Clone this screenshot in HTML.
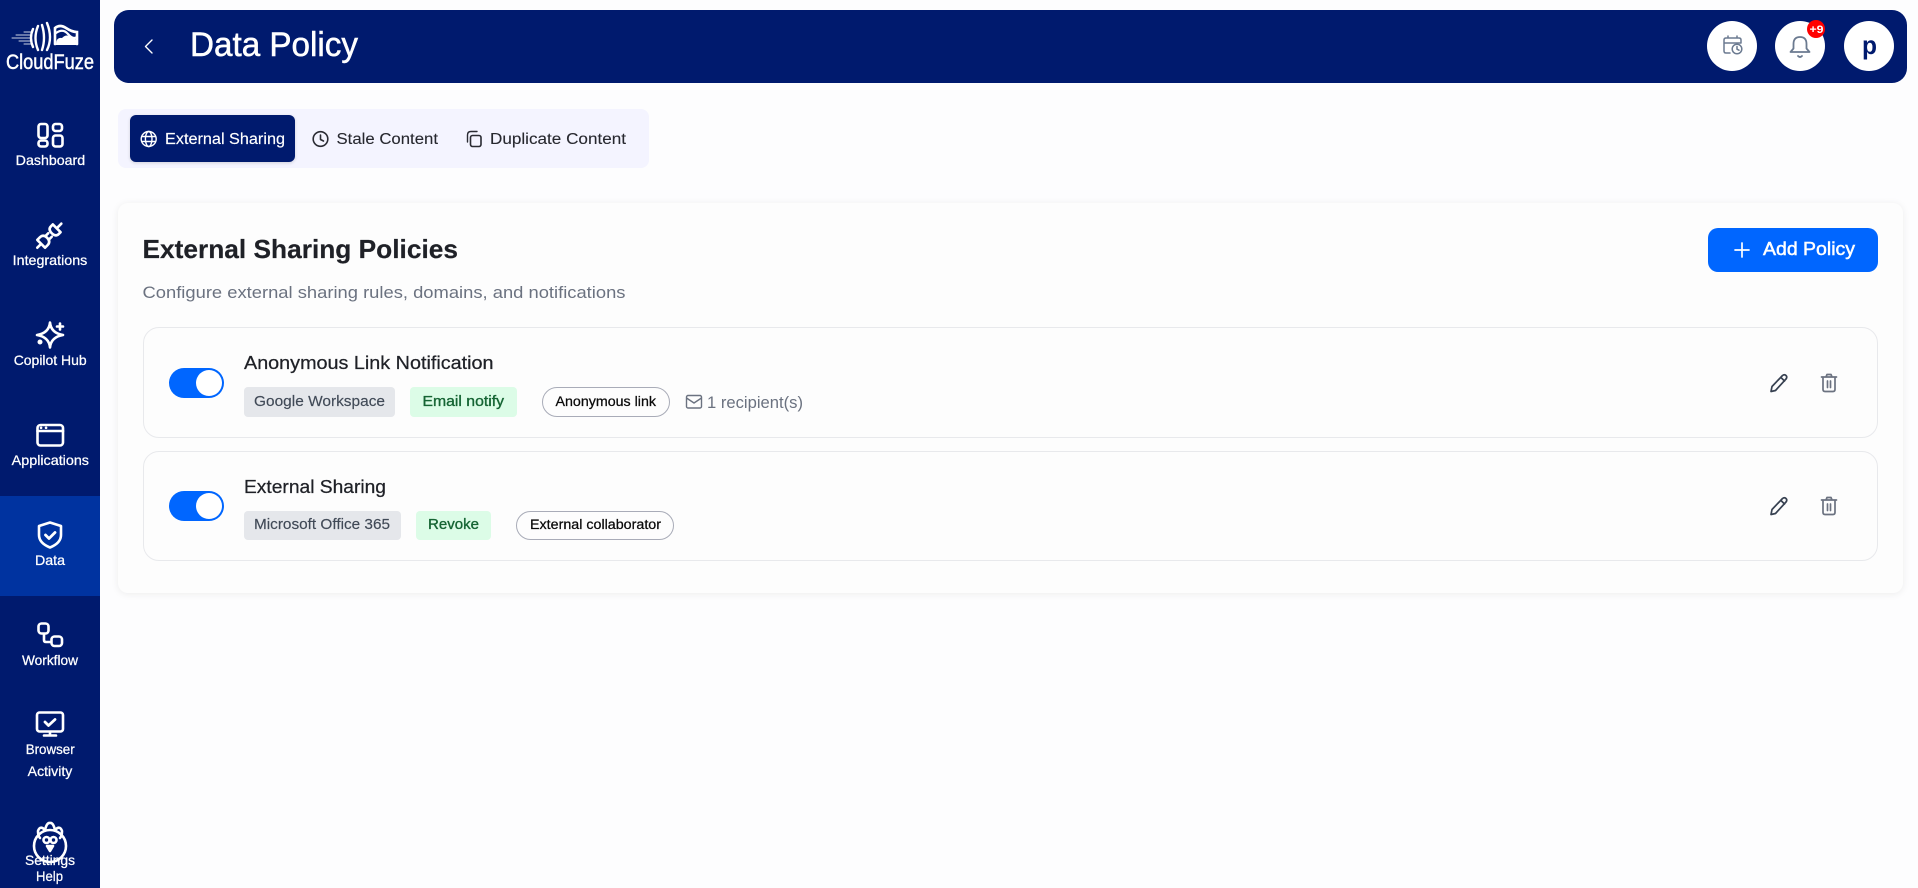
<!DOCTYPE html>
<html lang="en">
<head>
<meta charset="utf-8">
<title>Data Policy</title>
<style>
html,body{margin:0;padding:0;width:1918px;height:888px;overflow:hidden;background:#fdfdfe;font-family:"Liberation Sans",sans-serif}
.b{position:absolute;box-sizing:border-box}
svg{position:absolute;left:0;top:0}
text{font-family:"Liberation Sans",sans-serif}
.nav{fill:#fff;font-size:14px;stroke:#fff;stroke-width:.25}
.ic{fill:none;stroke:#fff;stroke-width:2.6;stroke-linecap:round;stroke-linejoin:round}
</style>
</head>
<body>
<div class="b" style="left:0;top:0;width:100px;height:888px;background:#001a6e"></div>
<div class="b" style="left:0;top:496px;width:100px;height:100px;background:#0033a0"></div>
<div class="b" style="left:114px;top:10px;width:1793px;height:73px;background:#001a6e;border-radius:15px"></div>
<div class="b" style="left:118px;top:109px;width:531px;height:59px;background:#f4f4ff;border-radius:8px"></div>
<div class="b" style="left:130px;top:115px;width:165px;height:47px;background:#001a6e;border-radius:6px;box-shadow:0 1px 3px rgba(0,0,0,.15)"></div>
<div class="b" style="left:118px;top:203px;width:1785px;height:390px;background:#fdfdfd;border-radius:10px;box-shadow:0 1px 8px rgba(0,0,0,.07)"></div>
<div class="b" style="left:1708px;top:228px;width:170px;height:44px;background:#0066ff;border-radius:10px"></div>
<div class="b" style="left:143px;top:327px;width:1735px;height:111px;border:1.5px solid #e8e9ec;border-radius:16px"></div>
<div class="b" style="left:143px;top:451px;width:1735px;height:110px;border:1.5px solid #e8e9ec;border-radius:16px"></div>

<div class="b" style="left:169px;top:368px;width:55px;height:30px;background:#0066ff;border-radius:15px"></div>
<div class="b" style="left:196px;top:370px;width:26px;height:26px;background:#fff;border-radius:50%"></div>
<div class="b" style="left:169px;top:491px;width:55px;height:30px;background:#0066ff;border-radius:15px"></div>
<div class="b" style="left:196px;top:493px;width:26px;height:26px;background:#fff;border-radius:50%"></div>

<div class="b" style="left:244px;top:387px;width:151px;height:30px;background:#e5e7eb;border-radius:4px"></div>
<div class="b" style="left:410px;top:387px;width:107px;height:30px;background:#dcfce7;border-radius:4px"></div>
<div class="b" style="left:542px;top:387px;width:128px;height:30px;border:1px solid #a9acb8;border-radius:15px;background:#fdfdfd"></div>
<div class="b" style="left:244px;top:511px;width:157px;height:29px;background:#e5e7eb;border-radius:4px"></div>
<div class="b" style="left:416px;top:511px;width:75px;height:29px;background:#dcfce7;border-radius:4px"></div>
<div class="b" style="left:516px;top:511px;width:158px;height:29px;border:1px solid #a9acb8;border-radius:15px;background:#fdfdfd"></div>

<div class="b" style="left:1707px;top:21px;width:50px;height:50px;background:#fff;border-radius:50%"></div>
<div class="b" style="left:1775px;top:21px;width:50px;height:50px;background:#fff;border-radius:50%"></div>
<div class="b" style="left:1844px;top:21px;width:50px;height:50px;background:#fff;border-radius:50%"></div>
<div class="b" style="left:1807px;top:20px;width:18px;height:18px;background:#f00;border-radius:50%"></div>

<svg width="1918" height="888" viewBox="0 0 1918 888" xmlns="http://www.w3.org/2000/svg">
<!-- logo -->
<g fill="none" stroke="#fff" stroke-linecap="round">
<path d="M12 38H30M16 35H30M19 41H30M24 32H31M24 44H31" stroke-width="1" opacity=".8"/>
<path d="M33 29Q29 38 33 47M38 26Q33 38 38 50M42 25Q46 38 42 50M47 23Q53 38 47 50" stroke-width="2.4"/>
<path d="M55 44V28Q60 24 66 28T77 32V44" stroke-width="2.6"/>
<path d="M56 33Q63 28 68 34T77 37" stroke-width="2.2"/>
</g>
<path d="M56 45Q56 37 62 38Q67 33 71 38Q78 38 78 45Z" fill="#fff"/>
<text x="6" y="69" font-size="21" fill="#fff" stroke="#fff" stroke-width=".45" textLength="88" lengthAdjust="spacingAndGlyphs">CloudFuze</text>

<!-- nav icons -->
<g class="ic">
<rect x="38.500" y="124" width="9" height="14" rx="2.500"/><rect x="53" y="124" width="9" height="7" rx="2.500"/><rect x="53" y="135.500" width="9.500" height="11" rx="2.500"/><rect x="38.500" y="140.500" width="9" height="6" rx="2.500"/>
<g transform="rotate(-45 50 235)">
<path d="M32 235H37"/>
<path d="M37.500 229.500H41Q46 229.500 46 235Q46 240.500 41 240.500H37.500Z"/>
<path d="M46 232.500H50M46 237.500H50"/>
<path d="M59.500 229.500H57Q52.500 229.500 52.500 235Q52.500 240.500 57 240.500H59.500Z"/>
<path d="M60 235H66"/>
</g>
<path d="M50 322.500Q51 333 63 335Q51 337 50 347.500Q49 337 37 335Q49 333 50 322.500ZM60 323.500V329.500M57 326.500H63"/>
<circle cx="40" cy="342" r="1.200" fill="#fff"/>
<rect x="37.500" y="425" width="25.500" height="20.500" rx="3"/><path d="M37.500 431H63M41 427.800H41.100M46 427.800H46.100"/>
<path d="M50 522.500L61 526V535Q61 543 50 547.500Q39 543 39 535V526Z"/><path d="M45.500 535L49 538.500L55 532.500" stroke-width="2.800"/>
<rect x="38.500" y="623.500" width="10" height="10" rx="3"/><rect x="51.500" y="636.500" width="10.500" height="9.500" rx="3"/><path d="M44 634V640Q44 642 46 642H51"/>
<rect x="37" y="712.500" width="26" height="19" rx="2.500"/><path d="M50 732V735M44 735.500H56"/><path d="M45 722L48.500 725.500L55 719.500" stroke-width="2.800"/>
<circle cx="50" cy="846" r="16"/>
<path d="M45 830Q47 822 50 823Q53 822 55 830Q60 825 62 831Q62 836 60 838M40 838Q38 836 38 831Q40 825 45 830"/>
<circle cx="46.500" cy="840" r="3"/><circle cx="53.500" cy="840" r="3"/><path d="M47 846Q50 851 50 851Q50 851 53 846Z" fill="#fff"/>
</g>
<g class="nav">
<text x="15.700" y="165" textLength="69.500" lengthAdjust="spacingAndGlyphs">Dashboard</text>
<text x="12.700" y="265" textLength="74.600" lengthAdjust="spacingAndGlyphs">Integrations</text>
<text x="13.700" y="365" textLength="73" lengthAdjust="spacingAndGlyphs">Copilot Hub</text>
<text x="11.700" y="465" textLength="77.300" lengthAdjust="spacingAndGlyphs">Applications</text>
<text x="35" y="565" textLength="30" lengthAdjust="spacingAndGlyphs">Data</text>
<text x="22" y="665" textLength="56" lengthAdjust="spacingAndGlyphs">Workflow</text>
<text x="25.700" y="754" textLength="49" lengthAdjust="spacingAndGlyphs">Browser</text>
<text x="27.700" y="776" textLength="44.600" lengthAdjust="spacingAndGlyphs">Activity</text>
<text x="25" y="865" textLength="50" lengthAdjust="spacingAndGlyphs">Settings</text>
<text x="36" y="881" textLength="27" lengthAdjust="spacingAndGlyphs">Help</text>
</g>

<!-- header -->
<path d="M152 40L145.500 46.500L152 53" fill="none" stroke="#fff" stroke-width="1.400" stroke-linecap="round" stroke-linejoin="round"/>
<text x="190" y="56" font-size="34" fill="#fff" stroke="#fff" stroke-width=".5" textLength="168" lengthAdjust="spacingAndGlyphs">Data Policy</text>
<g fill="none" stroke="#6b7a90" stroke-width="1.500" stroke-linecap="round" stroke-linejoin="round">
<path d="M1741 43V40Q1741 38 1739 38H1726Q1724 38 1724 40V51Q1724 53 1726 53H1730M1728 38V36M1737 38V36M1724 43H1741"/>
<circle cx="1737" cy="49" r="4.800" fill="#fff"/><path d="M1737 46.500V49.200L1739 50.200"/>
<path d="M1800 37Q1793.500 37 1793.500 44V48.500L1790.500 52H1809.500L1806.500 48.500V44Q1806.500 37 1800 37ZM1798 56Q1800 58 1802 56" stroke-width="1.800"/>
</g>
<text x="1809.500" y="33" font-size="11" font-weight="700" fill="#fff" textLength="14" lengthAdjust="spacingAndGlyphs">+9</text>
<text x="1862" y="54" font-size="26" font-weight="700" fill="#001a6e" textLength="15" lengthAdjust="spacingAndGlyphs">p</text>

<!-- tabs -->
<g fill="none" stroke="#fff" stroke-width="1.400"><circle cx="148.700" cy="139" r="7.500"/><ellipse cx="148.700" cy="139" rx="3.300" ry="7.500"/><path d="M141.500 136.500H156M141.500 141.500H156"/></g>
<text x="165" y="144" font-size="15.500" fill="#fff" stroke="#fff" stroke-width=".15" textLength="120" lengthAdjust="spacingAndGlyphs">External Sharing</text>
<g fill="none" stroke="#2a2b33" stroke-width="1.600" stroke-linecap="round" stroke-linejoin="round"><circle cx="320.500" cy="139" r="7.300"/><path d="M320.500 135V139.500L323.500 141"/>
<rect x="470.500" y="135.500" width="10.500" height="11" rx="2"/><path d="M467.500 142V135Q467.500 131.500 471 131.500H477" stroke-width="1.400"/></g>
<text x="336.500" y="144" font-size="15.500" fill="#27282f" stroke="#27282f" stroke-width=".1" textLength="101.500" lengthAdjust="spacingAndGlyphs">Stale Content</text>
<text x="490" y="144" font-size="15.500" fill="#27282f" stroke="#27282f" stroke-width=".1" textLength="136" lengthAdjust="spacingAndGlyphs">Duplicate Content</text>

<!-- card head -->
<text x="142.500" y="258" font-size="26" font-weight="700" fill="#1f2127" stroke="#1f2127" stroke-width=".2" textLength="315.500" lengthAdjust="spacingAndGlyphs">External Sharing Policies</text>
<text x="142.500" y="298" font-size="17" fill="#6b7280" textLength="483" lengthAdjust="spacingAndGlyphs">Configure external sharing rules, domains, and notifications</text>
<path d="M1742 243V257M1735 250H1749" stroke="#fff" stroke-width="1.700" stroke-linecap="round"/>
<text x="1763" y="255" font-size="18.500" fill="#fff" stroke="#fff" stroke-width=".5" textLength="92" lengthAdjust="spacingAndGlyphs">Add Policy</text>

<!-- rows -->
<text x="244" y="369" font-size="18.500" fill="#1f2127" stroke="#1f2127" stroke-width=".25" textLength="249.500" lengthAdjust="spacingAndGlyphs">Anonymous Link Notification</text>
<text x="244" y="493" font-size="18.500" fill="#1f2127" stroke="#1f2127" stroke-width=".25" textLength="142" lengthAdjust="spacingAndGlyphs">External Sharing</text>

<text x="254" y="406" font-size="14.500" fill="#414a57" stroke="#414a57" stroke-width=".15" textLength="131" lengthAdjust="spacingAndGlyphs">Google Workspace</text>
<text x="422.500" y="406" font-size="14.500" fill="#166534" stroke="#166534" stroke-width=".35" textLength="81.500" lengthAdjust="spacingAndGlyphs">Email notify</text>
<text x="555.500" y="406" font-size="13.500" fill="#0a0a0a" stroke="#0a0a0a" stroke-width=".25" textLength="100.500" lengthAdjust="spacingAndGlyphs">Anonymous link</text>
<g fill="none" stroke="#6b7280" stroke-width="1.400" stroke-linejoin="round"><rect x="686.500" y="395.500" width="15" height="12.500" rx="1.500"/><path d="M686.500 398L694 403L701.500 398"/></g>
<text x="707" y="408" font-size="16.500" fill="#6b7280" textLength="96" lengthAdjust="spacingAndGlyphs">1 recipient(s)</text>

<text x="254" y="529" font-size="14.500" fill="#414a57" stroke="#414a57" stroke-width=".15" textLength="136" lengthAdjust="spacingAndGlyphs">Microsoft Office 365</text>
<text x="428" y="529" font-size="14.500" fill="#166534" stroke="#166534" stroke-width=".35" textLength="51" lengthAdjust="spacingAndGlyphs">Revoke</text>
<text x="530" y="529" font-size="13.500" fill="#0a0a0a" stroke="#0a0a0a" stroke-width=".25" textLength="131" lengthAdjust="spacingAndGlyphs">External collaborator</text>

<!-- action icons -->
<g fill="none" stroke-linecap="round" stroke-linejoin="round">
<path d="M1771 391.500L1772 386.500L1782.500 375.500Q1784.500 374 1786 375.500Q1787.500 377 1786 379L1775.500 390.500ZM1781 377.500L1784.500 381" stroke="#374151" stroke-width="1.700"/>
<path d="M1823 377H1835V389.500Q1835 391.500 1833 391.500H1825Q1823 391.500 1823 389.500ZM1821.500 377H1836.500M1826 377L1827 374.500H1831L1832 377M1827.500 381V387.500M1830.500 381V387.500" stroke="#6b7280" stroke-width="1.700"/>
</g>
<g fill="none" stroke-linecap="round" stroke-linejoin="round" transform="translate(0 123)">
<path d="M1771 391.500L1772 386.500L1782.500 375.500Q1784.500 374 1786 375.500Q1787.500 377 1786 379L1775.500 390.500ZM1781 377.500L1784.500 381" stroke="#374151" stroke-width="1.700"/>
<path d="M1823 377H1835V389.500Q1835 391.500 1833 391.500H1825Q1823 391.500 1823 389.500ZM1821.500 377H1836.500M1826 377L1827 374.500H1831L1832 377M1827.500 381V387.500M1830.500 381V387.500" stroke="#6b7280" stroke-width="1.700"/>
</g>
</svg>
</body>
</html>
